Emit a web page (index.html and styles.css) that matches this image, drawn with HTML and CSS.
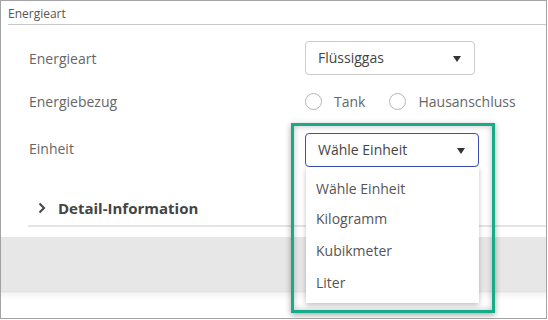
FILE: index.html
```html
<!DOCTYPE html>
<html lang="de">
<head>
    <meta charset="UTF-8">
    <meta name="viewport" content="width=device-width, initial-scale=1.0">
    <title>Energieart</title>
    <link rel="stylesheet" href="styles.css">
</head>
<body>
<div class="frame">
    <div class="legend">Energieart</div>

    <div class="form">
        <div class="row">
            <span class="label">Energieart</span>
            <div class="select select-gas">Flüssiggas<span class="caret"></span></div>
        </div>

        <div class="row row-radio">
            <span class="label">Energiebezug</span>
            <div class="radios">
                <span class="radio"></span><span class="radio-text">Tank</span>
                <span class="radio"></span><span class="radio-text">Hausanschluss</span>
            </div>
        </div>

        <div class="row">
            <span class="label label-unit">Einheit</span>
            <div class="select-wrap">
                <div class="select select-unit">Wähle Einheit<span class="caret"></span></div>
                <ul class="menu">
                    <li>Wähle Einheit</li>
                    <li>Kilogramm</li>
                    <li>Kubikmeter</li>
                    <li>Liter</li>
                </ul>
            </div>
        </div>
    </div>

    <div class="detail">
        <svg class="chevron" width="8" height="12" viewBox="0 0 8 12">
            <polyline points="1.5,1.5 6,6 1.5,10.5" fill="none" stroke="#444" stroke-width="2"/>
        </svg>
        <span>Detail-Information</span>
    </div>

    <div class="band"></div>

    <!-- markierung um das offene dropdown -->
    <div class="highlight"></div>
</div>
</body>
</html>
```

FILE: styles.css
```css
* {
    margin: 0;
    padding: 0;
    box-sizing: border-box;
}

body {
    font-family: "Open Sans", "Liberation Sans", sans-serif;
    background: #fff;
}

.frame {
    position: relative;
    width: 547px;
    height: 319px;
    border: 1px solid #a3a3a3;
    overflow: hidden;
}

.legend {
    margin-left: 7px;
    height: 24px;
    padding-top: 5px;
    font-size: 12px;
    line-height: 16px;
    color: #555;
    border-bottom: 1px solid #c9c9c9;
}

.form {
    padding-top: 16px;
}

.row {
    display: flex;
    align-items: center;
    height: 34px;
}

.row-radio {
    height: 40px;
    margin: 6px 0 12px;
}

.label {
    width: 304px;
    padding-left: 28px;
    font-size: 14px;
    color: #666;
}

.label-unit {
    margin-top: -4px;
}

.select {
    position: relative;
    height: 34px;
    padding-left: 12px;
    font-size: 14px;
    line-height: 32px;
    color: #444;
    border: 1px solid #ccc;
    border-radius: 4px;
    background: #fff;
}

.select-gas {
    width: 170px;
}

.select-unit {
    width: 174px;
    border-color: #3f4fb8;
}

.caret {
    position: absolute;
    right: 13px;
    top: 14px;
    border-left: 4px solid transparent;
    border-right: 4px solid transparent;
    border-top: 6px solid #333;
}

.radios {
    display: flex;
    align-items: center;
    font-size: 14px;
    color: #666;
}

.radio {
    width: 17px;
    height: 17px;
    border: 1.5px solid #b5b5b5;
    border-radius: 50%;
}

.radio-text {
    margin-left: 12px;
    margin-right: 24px;
}

.select-wrap {
    position: relative;
    z-index: 3;
}

.menu {
    position: absolute;
    left: 1px;
    top: 34px;
    width: 173px;
    padding: 7px 0 4px;
    list-style: none;
    background: #fff;
    box-shadow: 0 2px 5px rgba(0, 0, 0, 0.25);
    font-size: 14px;
    color: #555;
}

.menu li {
    padding-left: 10px;
    line-height: 32px;
}

.menu li:first-child {
    line-height: 29px;
}

.detail {
    display: flex;
    align-items: center;
    height: 60px;
    margin-left: 27px;
    padding: 24px 0 0 10px;
    border-bottom: 2px solid #e4e4e4;
    font-size: 15px;
    font-weight: bold;
    color: #444;
}

.chevron {
    margin-right: 12px;
}

.band {
    height: 63px;
    margin-top: 10px;
    background: linear-gradient(#e7e7e7 0, #e7e7e7 54px, #dcdcdc 54px, #f4f4f4 56px, #fff 63px);
}

.highlight {
    position: absolute;
    left: 290px;
    top: 122px;
    width: 204px;
    height: 190px;
    border: 3px solid #17ab8a;
    box-shadow: 0 2px 6px rgba(0, 0, 0, 0.35), inset 0 0 6px rgba(0, 0, 0, 0.25);
    z-index: 4;
}
```
